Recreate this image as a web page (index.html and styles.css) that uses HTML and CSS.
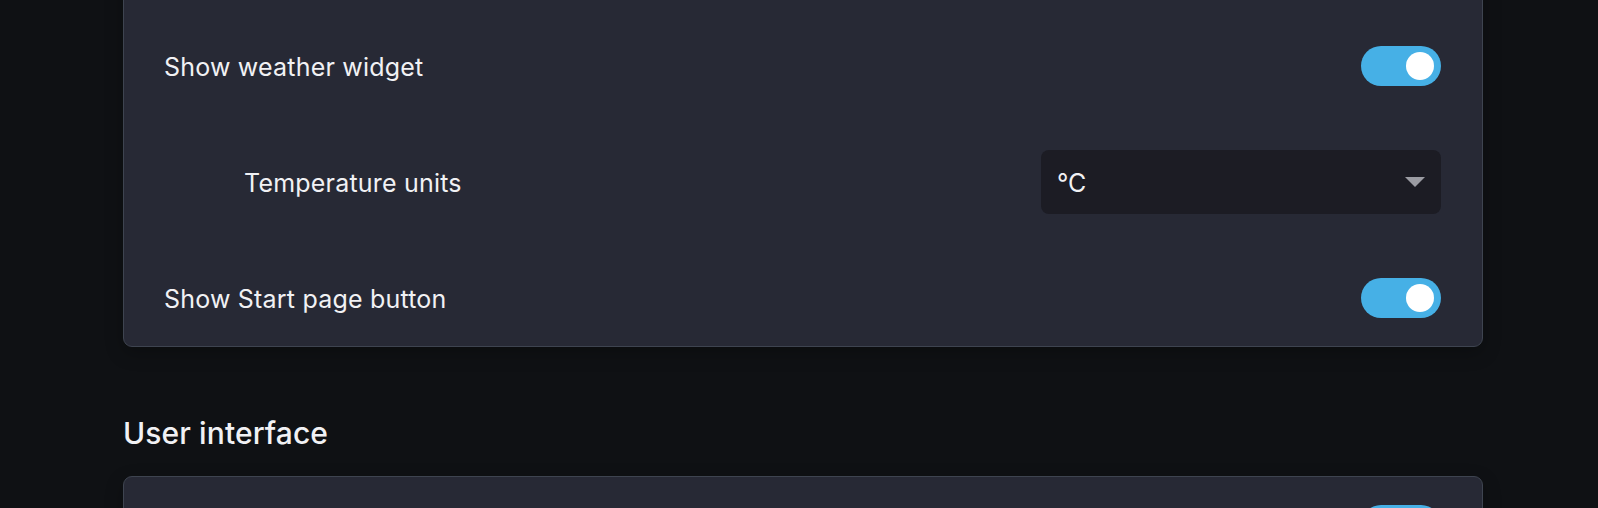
FILE: index.html
```html
<!DOCTYPE html>
<html lang="en">
<head>
<meta charset="utf-8">
<title>Settings</title>
<link rel="stylesheet" href="styles.css">
</head>
<body>
<main class="page">
  <section class="card card-first">
    <div class="row">
      <span class="label">Show weather widget</span>
      <span class="toggle on"><span class="knob"></span></span>
    </div>
    <div class="row sub">
      <span class="label">Temperature units</span>
      <div class="select">
        <span class="select-value">°C</span>
        <svg class="caret" width="20" height="10" viewBox="0 0 20 10"><path d="M0 0H20L10 10Z" fill="#9b9ca3"/></svg>
      </div>
    </div>
    <div class="row">
      <span class="label">Show Start page button</span>
      <span class="toggle on"><span class="knob"></span></span>
    </div>
  </section>

  <h2 class="section-title">User interface</h2>

  <section class="card">
    <div class="row row-end">
      <span class="toggle on"><span class="knob"></span></span>
    </div>
  </section>
</main>
</body>
</html>
```
FILE: styles.css
```css
html, body {
  margin: 0;
  padding: 0;
  background: #0f1114;
  overflow: hidden;
}
body {
  font-family: Inter, "Noto Sans", sans-serif;
  color: #f1f1f4;
}
.page {
  width: 1360px;
  margin-left: 123px;
  margin-top: -51px;
}
.card {
  box-sizing: border-box;
  background: #272935;
  border: 1px solid #3e4450;
  border-radius: 9px;
  padding: 16px 41px 16px 40px;
  display: flex;
  flex-direction: column;
  gap: 52px;
  box-shadow: 0 6px 18px rgba(0, 0, 0, 0.25);
}
.card-first {
  padding-top: 84px;
}
.row {
  height: 64px;
  display: flex;
  align-items: center;
  justify-content: space-between;
}
.row-end {
  justify-content: flex-end;
}
.row.sub {
  padding-left: 80px;
}
.label {
  font-size: 25px;
  letter-spacing: 0.2px;
  padding-top: 2px;
}
.toggle {
  box-sizing: border-box;
  width: 80px;
  height: 40px;
  border-radius: 20px;
  background: #46b0e6;
  display: flex;
  align-items: center;
  justify-content: flex-end;
  padding: 0 7px;
}
.knob {
  width: 28px;
  height: 28px;
  border-radius: 50%;
  background: #ffffff;
}
.select {
  box-sizing: border-box;
  width: 400px;
  height: 64px;
  border-radius: 8px;
  background: #1c1c24;
  display: flex;
  align-items: center;
  justify-content: space-between;
  padding: 0 16px;
}
.select-value {
  font-size: 25px;
  padding-top: 2px;
}
.caret {
  display: block;
}
.section-title {
  font-size: 30px;
  font-weight: 500;
  line-height: 36px;
  margin: 68px 0 25px;
  letter-spacing: 0.1px;
}
```
